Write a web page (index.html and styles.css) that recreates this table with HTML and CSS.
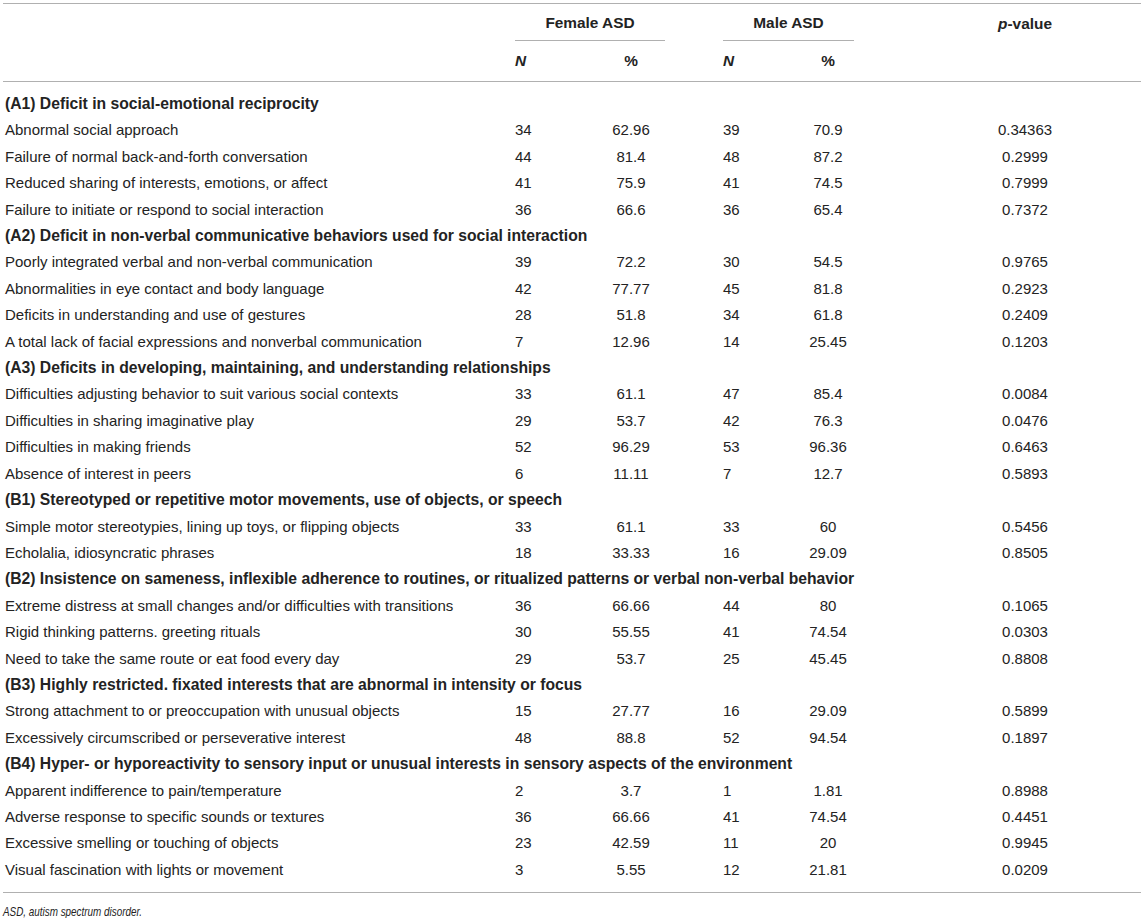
FILE: index.html
```html
<!DOCTYPE html>
<html>
<head>
<meta charset="utf-8">
<link rel="stylesheet" href="styles.css">
</head>
<body>
<div class="wrap">
<table class="tbl">
<colgroup>
<col class="c1"><col class="c2"><col class="c3"><col class="c4"><col class="c5"><col class="c6">
</colgroup>
<thead>
<tr class="h1">
<th></th>
<th colspan="2"><div class="grp grp-f">Female ASD</div></th>
<th colspan="2"><div class="grp grp-m">Male ASD</div></th>
<th class="pvh"><i>p</i>-value</th>
</tr>
<tr class="h2">
<th></th>
<th class="n"><i>N</i></th>
<th class="pct pf">%</th>
<th class="n"><i>N</i></th>
<th class="pct pm">%</th>
<th></th>
</tr>
</thead>
<tbody>
<tr class="sec"><td colspan="6">(A1) Deficit in social-emotional reciprocity</td></tr>
<tr><td class="lbl">Abnormal social approach</td><td class="n">34</td><td class="pct pf">62.96</td><td class="n">39</td><td class="pct pm">70.9</td><td class="pv">0.34363</td></tr>
<tr><td class="lbl">Failure of normal back-and-forth conversation</td><td class="n">44</td><td class="pct pf">81.4</td><td class="n">48</td><td class="pct pm">87.2</td><td class="pv">0.2999</td></tr>
<tr><td class="lbl">Reduced sharing of interests, emotions, or affect</td><td class="n">41</td><td class="pct pf">75.9</td><td class="n">41</td><td class="pct pm">74.5</td><td class="pv">0.7999</td></tr>
<tr><td class="lbl">Failure to initiate or respond to social interaction</td><td class="n">36</td><td class="pct pf">66.6</td><td class="n">36</td><td class="pct pm">65.4</td><td class="pv">0.7372</td></tr>
<tr class="sec"><td colspan="6">(A2) Deficit in non-verbal communicative behaviors used for social interaction</td></tr>
<tr><td class="lbl">Poorly integrated verbal and non-verbal communication</td><td class="n">39</td><td class="pct pf">72.2</td><td class="n">30</td><td class="pct pm">54.5</td><td class="pv">0.9765</td></tr>
<tr><td class="lbl">Abnormalities in eye contact and body language</td><td class="n">42</td><td class="pct pf">77.77</td><td class="n">45</td><td class="pct pm">81.8</td><td class="pv">0.2923</td></tr>
<tr><td class="lbl">Deficits in understanding and use of gestures</td><td class="n">28</td><td class="pct pf">51.8</td><td class="n">34</td><td class="pct pm">61.8</td><td class="pv">0.2409</td></tr>
<tr><td class="lbl">A total lack of facial expressions and nonverbal communication</td><td class="n">7</td><td class="pct pf">12.96</td><td class="n">14</td><td class="pct pm">25.45</td><td class="pv">0.1203</td></tr>
<tr class="sec"><td colspan="6">(A3) Deficits in developing, maintaining, and understanding relationships</td></tr>
<tr><td class="lbl">Difficulties adjusting behavior to suit various social contexts</td><td class="n">33</td><td class="pct pf">61.1</td><td class="n">47</td><td class="pct pm">85.4</td><td class="pv">0.0084</td></tr>
<tr><td class="lbl">Difficulties in sharing imaginative play</td><td class="n">29</td><td class="pct pf">53.7</td><td class="n">42</td><td class="pct pm">76.3</td><td class="pv">0.0476</td></tr>
<tr><td class="lbl">Difficulties in making friends</td><td class="n">52</td><td class="pct pf">96.29</td><td class="n">53</td><td class="pct pm">96.36</td><td class="pv">0.6463</td></tr>
<tr><td class="lbl">Absence of interest in peers</td><td class="n">6</td><td class="pct pf">11.11</td><td class="n">7</td><td class="pct pm">12.7</td><td class="pv">0.5893</td></tr>
<tr class="sec"><td colspan="6">(B1) Stereotyped or repetitive motor movements, use of objects, or speech</td></tr>
<tr><td class="lbl">Simple motor stereotypies, lining up toys, or flipping objects</td><td class="n">33</td><td class="pct pf">61.1</td><td class="n">33</td><td class="pct pm">60</td><td class="pv">0.5456</td></tr>
<tr><td class="lbl">Echolalia, idiosyncratic phrases</td><td class="n">18</td><td class="pct pf">33.33</td><td class="n">16</td><td class="pct pm">29.09</td><td class="pv">0.8505</td></tr>
<tr class="sec"><td colspan="6">(B2) Insistence on sameness, inflexible adherence to routines, or ritualized patterns or verbal non-verbal behavior</td></tr>
<tr><td class="lbl">Extreme distress at small changes and/or difficulties with transitions</td><td class="n">36</td><td class="pct pf">66.66</td><td class="n">44</td><td class="pct pm">80</td><td class="pv">0.1065</td></tr>
<tr><td class="lbl">Rigid thinking patterns. greeting rituals</td><td class="n">30</td><td class="pct pf">55.55</td><td class="n">41</td><td class="pct pm">74.54</td><td class="pv">0.0303</td></tr>
<tr><td class="lbl">Need to take the same route or eat food every day</td><td class="n">29</td><td class="pct pf">53.7</td><td class="n">25</td><td class="pct pm">45.45</td><td class="pv">0.8808</td></tr>
<tr class="sec"><td colspan="6">(B3) Highly restricted. fixated interests that are abnormal in intensity or focus</td></tr>
<tr><td class="lbl">Strong attachment to or preoccupation with unusual objects</td><td class="n">15</td><td class="pct pf">27.77</td><td class="n">16</td><td class="pct pm">29.09</td><td class="pv">0.5899</td></tr>
<tr><td class="lbl">Excessively circumscribed or perseverative interest</td><td class="n">48</td><td class="pct pf">88.8</td><td class="n">52</td><td class="pct pm">94.54</td><td class="pv">0.1897</td></tr>
<tr class="sec"><td colspan="6">(B4) Hyper- or hyporeactivity to sensory input or unusual interests in sensory aspects of the environment</td></tr>
<tr><td class="lbl">Apparent indifference to pain/temperature</td><td class="n">2</td><td class="pct pf">3.7</td><td class="n">1</td><td class="pct pm">1.81</td><td class="pv">0.8988</td></tr>
<tr><td class="lbl">Adverse response to specific sounds or textures</td><td class="n">36</td><td class="pct pf">66.66</td><td class="n">41</td><td class="pct pm">74.54</td><td class="pv">0.4451</td></tr>
<tr><td class="lbl">Excessive smelling or touching of objects</td><td class="n">23</td><td class="pct pf">42.59</td><td class="n">11</td><td class="pct pm">20</td><td class="pv">0.9945</td></tr>
<tr><td class="lbl">Visual fascination with lights or movement</td><td class="n">3</td><td class="pct pf">5.55</td><td class="n">12</td><td class="pct pm">21.81</td><td class="pv">0.0209</td></tr>
</tbody>
</table>
<p class="note"><span class="note-text">ASD, autism spectrum disorder.</span></p>
</div>
</body>
</html>
```

FILE: styles.css
```css
html, body {
  margin: 0;
  padding: 0;
  background: #ffffff;
}

body {
  font-family: "Liberation Sans", Arial, sans-serif;
  font-size: 15px;
  color: #232323;
}

.wrap {
  padding: 3px 3px 0 3px;
}

.tbl {
  width: 1138px;
  border-collapse: collapse;
  table-layout: fixed;
  border-top: 1px solid #b0b0b0;
  border-bottom: 1px solid #b0b0b0;
}

.c1 { width: 507px; }
.c2 { width: 62px; }
.c3 { width: 146px; }
.c4 { width: 60px; }
.c5 { width: 131px; }
.c6 { width: 232px; }

.tbl th,
.tbl td {
  padding: 0;
  font-weight: normal;
  text-align: left;
  white-space: nowrap;
}

.tbl th {
  font-weight: bold;
  font-size: 15.4px;
}

.h1 th {
  height: 37px;
  vertical-align: bottom;
}

.h1 th.pvh {
  vertical-align: top;
  text-align: center;
  padding-top: 11px;
  height: 26px;
  line-height: 18px;
}

.grp {
  line-height: 18px;
  padding-bottom: 8px;
  border-bottom: 1px solid #b0b0b0;
  text-align: center;
}

.grp-f {
  margin-left: 5px;
  margin-right: 53px;
}

.grp-m {
  margin-left: 5px;
  margin-right: 55px;
}

.h2 th {
  height: 40px;
  line-height: 18px;
  border-bottom: 1px solid #b0b0b0;
  vertical-align: middle;
}

.tbl .n {
  padding-left: 5px;
  text-align: left;
}

.tbl .pct {
  text-align: center;
}

.tbl .pf {
  padding-right: 28px;
}

.tbl .pm {
  padding-right: 31px;
}

.tbl .pv {
  text-align: center;
}

.tbl .lbl,
.tbl .sec td {
  padding-left: 2px;
}

.tbl td {
  line-height: 26.4px;
}

.tbl .sec td {
  font-weight: bold;
  font-size: 15.7px;
}

.tbl tbody tr:first-child td {
  padding-top: 9px;
}

.tbl tbody tr:last-child td {
  padding-bottom: 9px;
}

.note {
  margin: 0;
  padding-top: 10px;
  line-height: 18px;
  font-style: italic;
  font-size: 13px;
}

.note-text {
  display: inline-block;
  transform: scaleX(0.76);
  transform-origin: left center;
}
```
